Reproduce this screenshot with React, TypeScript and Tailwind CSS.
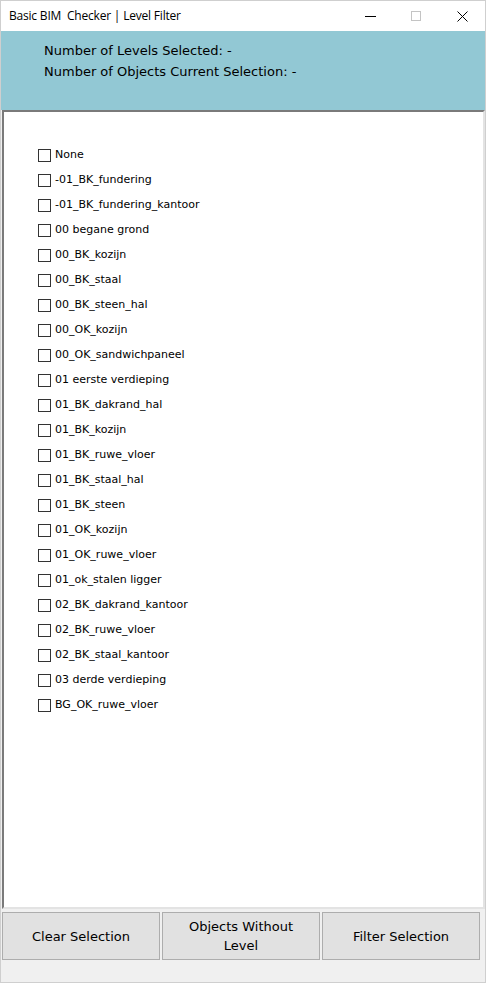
import React from "react";

const levels = [
  "None",
  "-01_BK_fundering",
  "-01_BK_fundering_kantoor",
  "00 begane grond",
  "00_BK_kozijn",
  "00_BK_staal",
  "00_BK_steen_hal",
  "00_OK_kozijn",
  "00_OK_sandwichpaneel",
  "01 eerste verdieping",
  "01_BK_dakrand_hal",
  "01_BK_kozijn",
  "01_BK_ruwe_vloer",
  "01_BK_staal_hal",
  "01_BK_steen",
  "01_OK_kozijn",
  "01_OK_ruwe_vloer",
  "01_ok_stalen ligger",
  "02_BK_dakrand_kantoor",
  "02_BK_ruwe_vloer",
  "02_BK_staal_kantoor",
  "03 derde verdieping",
  "BG_OK_ruwe_vloer",
];

const App = () => {
  return (
    <div className="w-[486px] h-[983px] flex flex-col bg-[#f0f0f0] border border-[#cfcfcf] font-['DejaVu_Sans',sans-serif] text-black">
      {/* title bar */}
      <div className="h-[30px] bg-white flex items-center justify-between">
        <span className="pl-2 text-[12px] font-['Open_Sans',sans-serif] tracking-[-0.2px]">
          Basic BIM&nbsp; Checker | Level Filter
        </span>
        <div className="flex items-center h-full">
          <div className="w-[46px] h-full flex items-center justify-center">
            <div className="w-[11px] h-px bg-black" />
          </div>
          <div className="w-[46px] h-full flex items-center justify-center">
            <div className="w-[10px] h-[10px] border border-[#c4c4c4]" />
          </div>
          <div className="w-[46px] h-full flex items-center justify-center">
            <svg width="11" height="11" viewBox="0 0 11 11">
              <path d="M0.5 0.5 L10.5 10.5 M10.5 0.5 L0.5 10.5" stroke="#000" strokeWidth="1" />
            </svg>
          </div>
        </div>
      </div>

      {/* info band */}
      <div className="h-[79px] bg-[#92c8d4] pl-[43px] pt-[9px] text-[13px] leading-[21px]">
        <div>Number of Levels Selected: -</div>
        <div>Number of Objects Current Selection: -</div>
      </div>

      {/* level list */}
      <div className="ml-px h-[799px] bg-white border-t-2 border-l-2 border-t-[#7a7a7a] border-l-[#7a7a7a] border-r-2 border-b-2 border-r-[#e3e3e3] border-b-[#e3e3e3] pt-[31px] pl-[34px] text-[11px]">
        {levels.map((l) => (
          <div key={l} className="h-[25px] flex items-center gap-[4px]">
            <div className="w-[13px] h-[13px] border border-[#333] bg-white" />
            <span>{l}</span>
          </div>
        ))}
      </div>

      {/* buttons */}
      <div className="flex gap-[2px] pl-px mt-[3px] text-[13px]">
        <button className="w-[158px] h-[48px] bg-[#e1e1e1] border border-[#adadad] leading-[19px]">
          Clear Selection
        </button>
        <button className="w-[158px] h-[48px] bg-[#e1e1e1] border border-[#adadad] leading-[19px]">
          Objects Without
          <br />
          Level
        </button>
        <button className="w-[158px] h-[48px] bg-[#e1e1e1] border border-[#adadad] leading-[19px]">
          Filter Selection
        </button>
      </div>
    </div>
  );
};

export default App;
